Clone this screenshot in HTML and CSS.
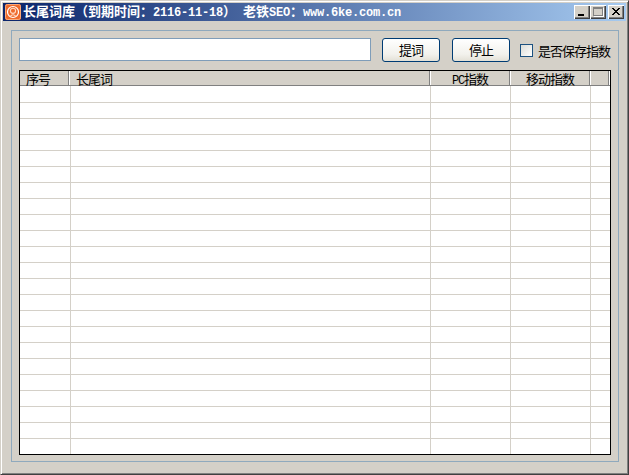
FILE: index.html
```html
<!DOCTYPE html>
<html lang="zh-CN">
<head>
<meta charset="utf-8">
<title>长尾词库</title>
<link rel="stylesheet" href="styles.css">
</head>
<body>
<div class="window">
  <div class="titlebar">
    <svg class="app-icon" width="16" height="16" viewBox="0 0 16 16">
      <rect x="0" y="0" width="16" height="16" rx="2" fill="#ee6a2c"/>
      <rect x="0.5" y="0.5" width="15" height="15" rx="2" fill="none" stroke="#f9a878"/>
      <circle cx="8" cy="8" r="5.5" fill="none" stroke="#fff" stroke-width="1.2"/>
      <circle cx="8" cy="6.8" r="2.6" fill="none" stroke="#ffd9c2" stroke-width="1.1"/>
      <path d="M5 12.5 Q8 9 11 12.5" fill="none" stroke="#ffd9c2" stroke-width="1.1"/>
    </svg>
    <div class="title"><span>长尾词库（到期时间：</span><span class="latin">2116-11-18</span><span>）</span><span class="latin"> </span><span>老铁</span><span class="latin">SEO</span><span>：</span><span class="latin">www.6ke.com.cn</span></div>
    <div class="controls">
      <div class="ctl"><svg width="16" height="14" viewBox="0 0 16 14"><rect x="4" y="9" width="6" height="2" fill="#000"/></svg></div>
      <div class="ctl"><svg width="16" height="14" viewBox="0 0 16 14"><rect x="4.5" y="3.5" width="9" height="8" fill="none" stroke="#fff"/><rect x="3.5" y="2.5" width="9" height="8" fill="#d4d0c8" stroke="#808080"/><rect x="3" y="2" width="10" height="2" fill="#808080"/></svg></div>
      <div class="ctl ctl-close"><svg width="16" height="14" viewBox="0 0 16 14"><path d="M4 3 L11 10 M5 3 L12 10 M11 3 L4 10 M12 3 L5 10" stroke="#000" stroke-width="1" fill="none"/></svg></div>
    </div>
  </div>
  <div class="client">
    <div class="group">
      <div class="toolbar">
        <input class="field" type="text">
        <button class="btn btn-first" type="button">提词</button>
        <button class="btn btn-second" type="button">停止</button>
        <label class="check"><span class="box"></span><span class="check-text">是否保存指数</span></label>
      </div>
      <div class="list">
        <div class="head">
          <div class="hc hc-left">序号</div>
          <div class="hc hc-left">长尾词</div>
          <div class="hc hc-center"><span class="mono">PC</span>指数</div>
          <div class="hc hc-center">移动指数</div>
          <div class="hc"></div>
        </div>
        <div class="rows">
          <div class="row row-first"><i></i><i></i><i></i><i></i><i></i></div>
          <div class="row"><i></i><i></i><i></i><i></i><i></i></div>
          <div class="row"><i></i><i></i><i></i><i></i><i></i></div>
          <div class="row"><i></i><i></i><i></i><i></i><i></i></div>
          <div class="row"><i></i><i></i><i></i><i></i><i></i></div>
          <div class="row"><i></i><i></i><i></i><i></i><i></i></div>
          <div class="row"><i></i><i></i><i></i><i></i><i></i></div>
          <div class="row"><i></i><i></i><i></i><i></i><i></i></div>
          <div class="row"><i></i><i></i><i></i><i></i><i></i></div>
          <div class="row"><i></i><i></i><i></i><i></i><i></i></div>
          <div class="row"><i></i><i></i><i></i><i></i><i></i></div>
          <div class="row"><i></i><i></i><i></i><i></i><i></i></div>
          <div class="row"><i></i><i></i><i></i><i></i><i></i></div>
          <div class="row"><i></i><i></i><i></i><i></i><i></i></div>
          <div class="row"><i></i><i></i><i></i><i></i><i></i></div>
          <div class="row"><i></i><i></i><i></i><i></i><i></i></div>
          <div class="row"><i></i><i></i><i></i><i></i><i></i></div>
          <div class="row"><i></i><i></i><i></i><i></i><i></i></div>
          <div class="row"><i></i><i></i><i></i><i></i><i></i></div>
          <div class="row"><i></i><i></i><i></i><i></i><i></i></div>
          <div class="row"><i></i><i></i><i></i><i></i><i></i></div>
          <div class="row"><i></i><i></i><i></i><i></i><i></i></div>
          <div class="row"><i></i><i></i><i></i><i></i><i></i></div>
        </div>
      </div>
    </div>
  </div>
</div>
</body>
</html>
```

FILE: styles.css
```css
* { box-sizing: border-box; }
html, body { margin: 0; padding: 0; background: #d4d0c8; }
body {
  width: 629px;
  height: 475px;
  overflow: hidden;
  font-family: "Noto Sans CJK SC", "Liberation Sans", sans-serif;
  font-size: 13px;
  letter-spacing: -1px;
  color: #000;
}
.window {
  width: 629px;
  height: 475px;
  display: flex;
  flex-direction: column;
  background: #d4d0c8;
  border: 1px solid;
  border-color: #d4d0c8 #404040 #404040 #d4d0c8;
  box-shadow: inset 1px 1px 0 #fff, inset -1px -1px 0 #808080;
  padding: 2px;
}
.titlebar {
  height: 18px;
  flex: none;
  display: flex;
  align-items: center;
  padding-left: 2px;
  padding-right: 2px;
  background: linear-gradient(to right, #0a246a, #a6caf0);
}
.app-icon { flex: none; display: block; }
.title {
  flex: 1;
  margin-left: 2px;
  color: #fff;
  font-weight: 700;
  font-size: 13px;
  line-height: 18px;
  letter-spacing: 0;
  white-space: pre;
  overflow: hidden;
}
.latin {
  font-family: "Liberation Mono", monospace;
  font-size: 12px;
  letter-spacing: -0.2px;
}
.mono {
  font-family: "Liberation Mono", monospace;
  font-size: 12px;
  letter-spacing: -1.2px;
}
.controls { display: flex; flex: none; }
.ctl {
  width: 16px;
  height: 14px;
  background: #d4d0c8;
  box-shadow: inset 1px 1px 0 #fff, inset -1px -1px 0 #404040, inset -2px -2px 0 #808080;
}
.ctl svg { display: block; }
.ctl-close { margin-left: 2px; }
.client { flex: 1; padding: 9px 7px 0 8px; min-height: 0; }
.group {
  height: 432px;
  border: 1px solid #8fa9bd;
  padding: 7px;
}
.toolbar {
  display: flex;
  align-items: flex-start;
  height: 24px;
  margin-bottom: 8px;
}
.field {
  width: 352px;
  height: 23px;
  border: 1px solid #7f9db9;
  background: #fff;
  padding: 0;
  outline: none;
}
.btn {
  width: 58px;
  height: 24px;
  padding: 0 0 1px;
  border: 1px solid #003c74;
  border-radius: 3px;
  background: linear-gradient(to bottom, #ffffff, #f2f1ec 70%, #e3e0d6);
  font: inherit;
  letter-spacing: -1px;
  line-height: 21px;
  color: #000;
}
.btn-first { margin-left: 11px; }
.btn-second { margin-left: 12px; }
.check {
  display: flex;
  align-items: center;
  height: 24px;
  margin-left: 10px;
  padding-top: 1px;
  white-space: nowrap;
}
.box {
  width: 13px;
  height: 13px;
  border: 1px solid #1c5180;
  background: linear-gradient(135deg, #dcdcd7, #ffffff);
}
.check-text { margin-left: 5px; }
.list {
  width: 592px;
  height: 385px;
  border: 1px solid #000;
  background: #fff;
  overflow: hidden;
}
.head {
  display: grid;
  grid-template-columns: 50px 361px 80px 80px 19px;
  height: 15px;
  background: #d4d0c8;
  border-bottom: 1px solid #808080;
}
.hc {
  height: 14px;
  line-height: 15px;
  white-space: nowrap;
  box-shadow: inset -1px 0 0 #fff, inset -2px 0 0 #808080;
  overflow: visible;
}
.hc-left { padding-left: 6px; }
.hc-center { text-align: center; padding-right: 2px; }
.row {
  display: grid;
  grid-template-columns: 51px 360px 80px 80px 19px;
  height: 16px;
  border-bottom: 1px solid #d4d0c8;
}
.row-first { height: 17px; }
.row i { display: block; border-right: 1px solid #d4d0c8; }
.row i:last-child { border-right: 0; }
```
